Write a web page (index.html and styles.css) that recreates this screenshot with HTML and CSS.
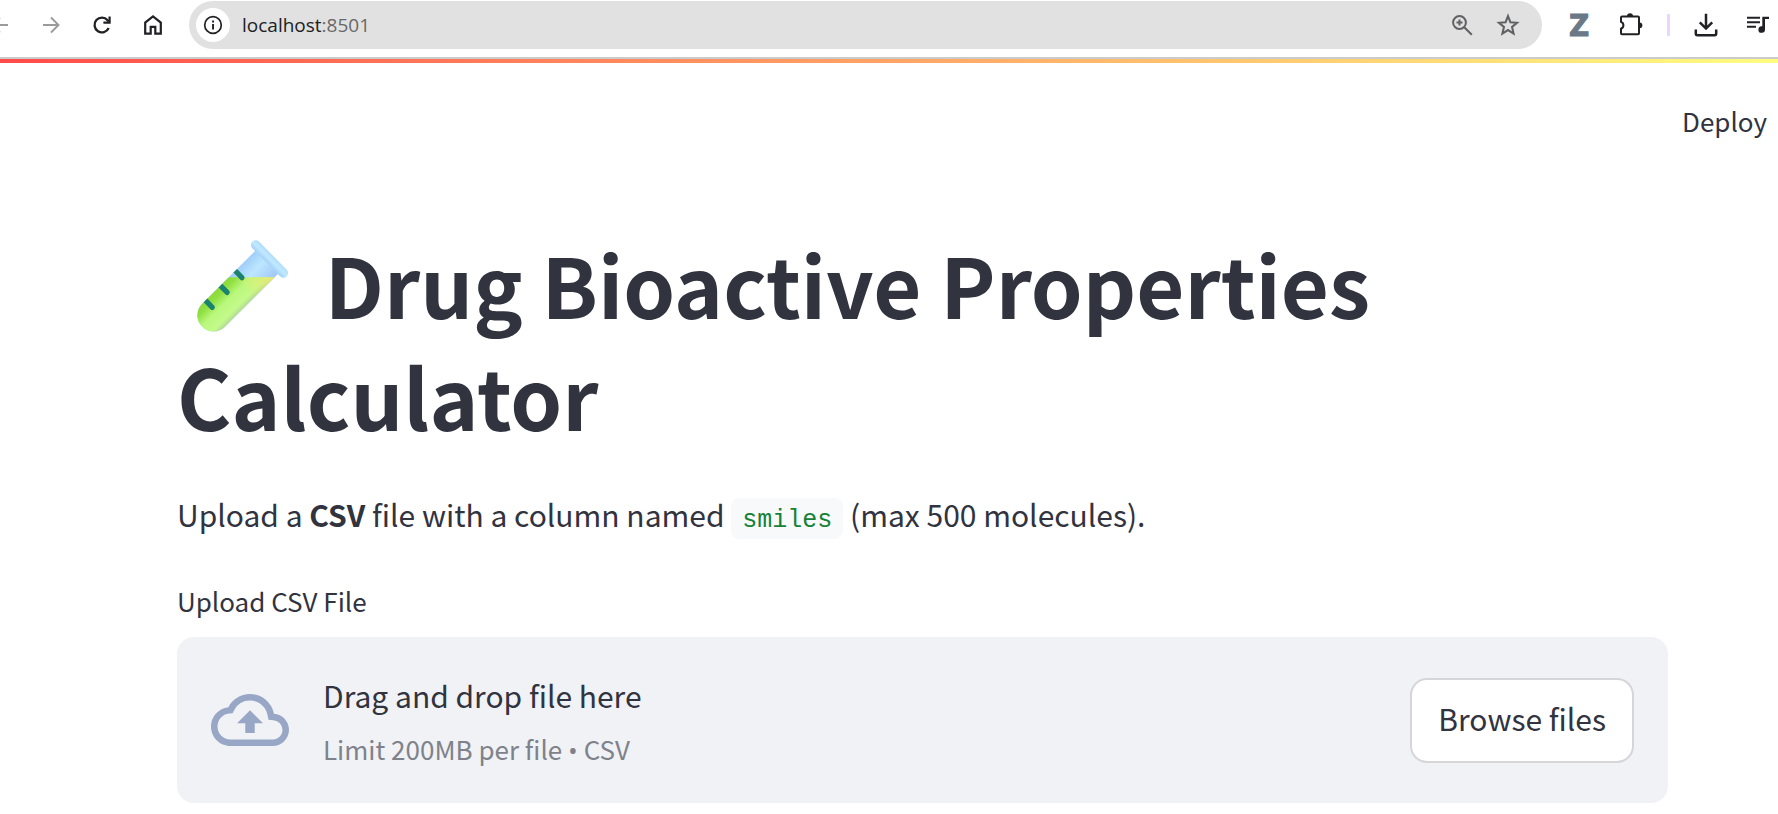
FILE: index.html
```html
<!DOCTYPE html>
<html lang="en">
<head>
<meta charset="utf-8">
<meta name="viewport" content="width=device-width, initial-scale=1">
<title>Drug Bioactive Properties Calculator</title>
<link rel="stylesheet" href="styles.css">
</head>
<body>
<nav class="toolbar" aria-label="Browser">
  <div class="nav-buttons">
    <button class="icon-button muted" aria-label="Back"><svg viewBox="0 0 24 24"><path d="M20 12H5M12 4.500L4.500 12l7.500 7.500" fill="none" stroke="currentColor" stroke-width="1.900"/></svg></button>
    <button class="icon-button muted" aria-label="Forward"><svg viewBox="0 0 24 24"><path d="M4 12h15M12 4.500l7.500 7.500-7.500 7.500" fill="none" stroke="currentColor" stroke-width="1.900"/></svg></button>
    <button class="icon-button" aria-label="Reload"><svg viewBox="0 0 24 24"><path d="M18.700 15A7.400 7.400 0 1 1 17.600 7.200L19.500 9.200" fill="none" stroke="currentColor" stroke-width="2.300"/><path d="M20.700 3.500v7.300h-7.300V8.600h5.100V3.500z" fill="currentColor"/></svg></button>
    <button class="icon-button" aria-label="Home"><svg viewBox="0 0 24 24"><path d="M4.200 20.700V9.600L12 3.500l7.800 6.100v11.100h-5.500v-6.900H9.700v6.900z" fill="none" stroke="currentColor" stroke-width="2.200"/></svg></button>
  </div>
  <div class="address">
    <button class="site-info" aria-label="Site information"><svg viewBox="0 0 24 24"><circle cx="12" cy="12" r="8.300" fill="none" stroke="currentColor" stroke-width="1.700"/><path d="M11.100 11h1.900v5.500h-1.900zM11.100 7.500h1.900v2h-1.900z" fill="currentColor"/></svg></button>
    <span class="url">localhost<span class="port">:8501</span></span>
    <button class="icon-button gray zoom" aria-label="Zoom"><svg viewBox="0 0 24 24"><g fill="none" stroke="currentColor" stroke-width="2"><circle cx="9.500" cy="9.500" r="6.400"/><path d="M14 14l7.800 7.800M9.500 6.500v6M6.500 9.500h6"/></g></svg></button>
    <button class="icon-button gray" aria-label="Bookmark"><svg viewBox="1 1 22 22"><path d="M12 3.800l2.200 5.600 6.100.500-4.600 3.900 1.400 6-5.100-3.200-5.100 3.200 1.400-6-4.600-3.900 6.100-.500z" fill="none" stroke="currentColor" stroke-width="1.900"/></svg></button>
  </div>
  <div class="extensions">
    <button class="icon-button ext-z" aria-label="Z extension">Z</button>
    <button class="icon-button" aria-label="Extensions"><svg viewBox="0 0 24 24"><path d="M3.500 3.500h15.500q1 0 1 1v15.700q0 1-1 1H3q-1 0-1-1v-4.500a3.600 3.600 0 0 0 0-6.800V4.500q0-1 1-1z" fill="none" stroke="currentColor" stroke-width="2"/><path d="M8 3.200a3 3 0 0 1 6 0zM20.500 9.400a2.900 2.900 0 0 1 0 5.800z" fill="currentColor"/></svg></button>
    <span class="divider"></span>
    <button class="icon-button" aria-label="Downloads"><svg viewBox="0 0 24 24"><path d="M12 .8v15M5.800 9.400L12 15.600l6.200-6.200M1.800 16.500v4.100q0 1.600 1.600 1.600h17.200q1.600 0 1.600-1.600v-4.100" fill="none" stroke="currentColor" stroke-width="2.500"/></svg></button>
    <button class="icon-button media" aria-label="Media controls"><svg viewBox="0 0 24 24"><path d="M1 4.800h13M1 9.300h13M1 13.700h9" stroke="currentColor" stroke-width="1.900"/><path d="M16.300 3.800H23v2.100h-4v10.700a3.300 3.300 0 1 1-2.700-3.300z" fill="currentColor"/></svg></button>
  </div>
</nav>
<div class="decoration"></div>
<header class="app-header"><button class="deploy">Deploy</button></header>
<main class="content">
  <h1><svg class="test-tube" viewBox="0 0 92 92" role="img" aria-label="Test tube">
    <defs>
      <linearGradient id="glass" gradientUnits="userSpaceOnUse" x1="46" y1="22" x2="70" y2="44"><stop offset="0" stop-color="#9fcbfa"/><stop offset=".45" stop-color="#bce7ff"/><stop offset="1" stop-color="#a4c8f8"/></linearGradient>
      <linearGradient id="liquid" gradientUnits="userSpaceOnUse" x1="24" y1="44" x2="47" y2="67"><stop offset="0" stop-color="#8bda38"/><stop offset=".2" stop-color="#91e042"/><stop offset=".5" stop-color="#baf87d"/><stop offset=".85" stop-color="#c3fa8a"/><stop offset="1" stop-color="#b4dd95"/></linearGradient>
      <linearGradient id="warm" gradientUnits="userSpaceOnUse" x1="52" y1="56" x2="76" y2="34"><stop offset="0" stop-color="#e5ea72" stop-opacity="0"/><stop offset="1" stop-color="#edea70"/></linearGradient>
      <linearGradient id="rim" gradientUnits="userSpaceOnUse" x1="70" y1="22" x2="76" y2="16"><stop offset="0" stop-color="#a7d4f8"/><stop offset=".5" stop-color="#c1e9ff"/><stop offset="1" stop-color="#b0dbfb"/></linearGradient>
      <clipPath id="level"><path d="M0 37.300h92V92H0z"/></clipPath>
    </defs>
    <path d="M58.500 10.500L4.800 64.200A16.200 16.200 0 0 0 27.700 87.100L81.400 33.400z" fill="url(#glass)"/>
    <g clip-path="url(#level)"><path d="M58.500 10.500L4.800 64.200A16.200 16.200 0 0 0 27.700 87.100L81.400 33.400z" fill="url(#liquid)"/><path d="M58.500 10.500L35 34v31l15-1L81.400 33.400z" fill="url(#warm)"/></g>
    <path d="M58.700 5l27.600 28" stroke="url(#rim)" stroke-width="9.500" stroke-linecap="round"/>
    <g fill="#1b826f"><path d="M36.400 32.600l3.700-3.700 6.700 6.900a2.600 2.600 0 0 1-3.700 3.700zM21.600 47.400l3.700-3.700 6.700 6.900a2.600 2.600 0 0 1-3.700 3.700zM6.700 62.300l3.700-3.700 6.700 6.900a2.600 2.600 0 0 1-3.700 3.700z"/></g>
  </svg> Drug Bioactive Properties Calculator</h1>
  <p class="intro">Upload a <strong>CSV</strong> file with a column named <code>smiles</code> (max 500 molecules).</p>
  <label class="field-label" for="csv-file">Upload CSV File</label>
  <section class="dropzone">
    <input class="file-input" id="csv-file" type="file" accept=".csv" tabindex="-1">
    <svg class="cloud" viewBox="0 0 24 24" aria-hidden="true"><path fill="currentColor" d="M19.350 10.040A7.490 7.490 0 0 0 12 4C9.110 4 6.600 5.640 5.350 8.040A5.994 5.994 0 0 0 0 14c0 3.310 2.690 6 6 6h13c2.760 0 5-2.240 5-5 0-2.640-2.050-4.780-4.650-4.960zM19 18H6c-2.210 0-4-1.790-4-4 0-2.050 1.530-3.760 3.560-3.970l1.070-.110.500-.950A5.469 5.469 0 0 1 12 6c2.620 0 4.880 1.860 5.390 4.430l.300 1.500 1.530.110A2.980 2.980 0 0 1 22 15c0 1.650-1.350 3-3 3zM8 13h2.550v3h2.900v-3H16l-4-4z"/></svg>
    <div class="instructions"><span class="drag">Drag and drop file here</span><span class="limit">Limit 200MB per file <span class="bullet">•</span> CSV</span></div>
    <button class="browse">Browse files</button>
  </section>
</main>
</body>
</html>
```
FILE: styles.css
```css
* {
  box-sizing: border-box;
}

body {
  margin: 0;
  overflow-x: hidden;
  background: #fff;
  color: #31333f;
  font-family: "Noto Sans CJK SC", "Noto Sans", sans-serif;
  font-size: 30px;
  line-height: 52px;
}

button {
  margin: 0;
  padding: 0;
  border: 0;
  background: none;
  color: inherit;
  font: inherit;
}

svg {
  display: block;
}

.toolbar {
  display: flex;
  align-items: center;
  height: 59px;
  padding: 1px 8px 8px 0;
  border-bottom: 2px solid #cbcbcb;
  color: #202124;
}

.nav-buttons {
  display: flex;
  gap: 27px;
  margin: 0 24px 0 -12px;
}

.icon-button {
  flex: none;
  width: 24px;
  height: 24px;
}

.muted {
  color: #9b9b9b;
}

.gray {
  color: #606164;
}

.address {
  display: flex;
  flex: 1;
  align-items: center;
  height: 48px;
  padding: 0 22px 0 7px;
  border-radius: 24px;
  background: #e1e1e1;
}

.site-info {
  display: grid;
  place-items: center;
  width: 34px;
  height: 34px;
  border-radius: 50%;
  background: #fff;
}

.site-info svg {
  width: 24px;
  height: 24px;
}

.url {
  flex: 1;
  margin-left: 12px;
  font: 19px/28px "Open Sans", sans-serif;
}

.port {
  color: #686868;
}

.zoom {
  margin-right: 22px;
}

.extensions {
  display: flex;
  align-items: center;
  gap: 24px;
  margin-left: 25px;
}

.ext-z {
  margin-right: 4px;
  color: #6b7885;
  font: bold 31px/24px "DejaVu Sans Condensed", "DejaVu Sans", sans-serif;
  -webkit-text-stroke: 1px #6b7885;
}

.media {
  margin-left: 4px;
}

.divider {
  width: 3px;
  height: 22px;
  border-radius: 1px;
  background: #e9d5ff;
}

.decoration {
  height: 4px;
  background: linear-gradient(90deg, #ff4b4b, #fffd80);
}

.app-header {
  display: flex;
  justify-content: flex-end;
  padding: 39px 11px 0 0;
}

.deploy,
.field-label,
.limit {
  font-size: 26px;
  line-height: 38px;
}

.content {
  padding: 87px 110px 10px 177px;
}

h1 {
  margin: 0 0 37px;
  font-size: 83px;
  font-weight: 700;
  line-height: 112px;
}

.test-tube {
  display: inline-block;
  width: 92px;
  height: 92px;
  margin: 0 17px 0 20px;
  vertical-align: -13px;
}

.intro {
  margin: 0 0 42px;
}

code {
  padding: 8px 11px 4px;
  border-radius: 8px;
  background: #f8f9fb;
  color: #158237;
  font: 25px/30px "Liberation Mono", monospace;
}

.field-label {
  display: block;
  margin-bottom: 17px;
}

.dropzone {
  display: flex;
  align-items: center;
  padding: 32px 34px;
  border-radius: 17px;
  background: #f0f2f6;
}

.file-input {
  position: absolute;
  width: 1px;
  height: 1px;
  overflow: hidden;
  opacity: 0;
}

.cloud {
  flex: none;
  width: 78px;
  height: 78px;
  margin-right: 34px;
  color: #98a7c6;
}

.instructions {
  display: flex;
  flex: 1;
  flex-direction: column;
  gap: 9px;
  padding-bottom: 2px;
}

.limit {
  color: #7f828b;
}

.bullet {
  font-family: "Open Sans", sans-serif;
}

.browse {
  padding: 12px 26px 17px;
  border: 2px solid #d6d6d9;
  border-radius: 17px;
  background: #fff;
}
```
